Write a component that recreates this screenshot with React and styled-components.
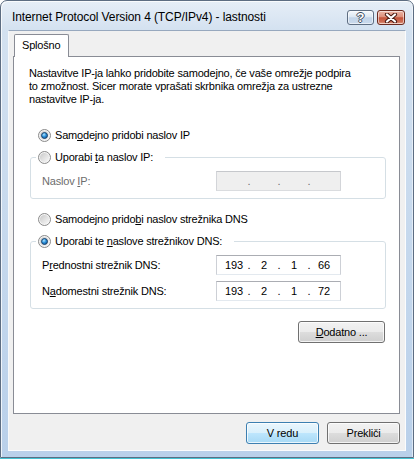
import React from "react";
import styled, { createGlobalStyle } from "styled-components";

const GlobalStyle = createGlobalStyle`
  html, body { margin: 0; padding: 0; background: #ffffff; }
  body {
    font-family: "Liberation Sans", Arial, sans-serif;
    font-size: 11px;
    letter-spacing: -0.19px;
    color: #000;
  }
  * { box-sizing: border-box; }
`;

const Page = styled.div`
  width: 414px;
  height: 459px;
  border-bottom: 1px solid #46c3d3;
  display: flex;
`;

const Window = styled.div`
  flex: 1;
  display: flex;
  flex-direction: column;
  border: 1px solid #5d6d82;
  border-radius: 7px 7px 0 0;
  background: linear-gradient(180deg, #e6eef7 0px, #d3e1f0 30px, #c5d8ed 55%, #b9d0ea 100%);
  box-shadow: inset 1px 1px 0 rgba(255, 255, 255, 0.75), inset -1px 0 0 rgba(255, 255, 255, 0.5);
  overflow: hidden;
`;

const TitleBar = styled.div`
  height: 29px;
  flex: none;
  display: flex;
  align-items: flex-start;
  justify-content: space-between;
  padding: 0 8px 0 11px;
`;

const Title = styled.div`
  margin-top: 9px;
  line-height: 15px;
  font-size: 12px;
  letter-spacing: -0.1px;
  white-space: nowrap;
`;

const CaptionButtons = styled.div`
  display: flex;
  gap: 3px;
  margin-top: 9px;
`;

const CaptionButton = styled.div`
  width: ${(p) => p.$w}px;
  height: 15px;
  border: 1px solid ${(p) => (p.$close ? "#6b2a1f" : "#5e6e82")};
  border-radius: 3px;
  display: flex;
  align-items: center;
  justify-content: center;
  background: ${(p) =>
    p.$close
      ? "linear-gradient(180deg, #ecb6a8 0%, #de907c 45%, #c4533a 52%, #cd6d54 82%, #e29f88 100%)"
      : "linear-gradient(180deg, #f4f8fc 0%, #dde8f3 45%, #c2d4e8 52%, #cadaed 100%)"};
  box-shadow: inset 0 0 0 1px rgba(255, 255, 255, 0.55);
`;

const HelpGlyph = styled.span`
  font-family: "Liberation Sans", Arial, sans-serif;
  font-weight: bold;
  font-size: 13px;
  line-height: 13px;
  color: #ffffff;
  text-shadow: 1px 0 0 #3c4b5c, -1px 0 0 #3c4b5c, 0 1px 0 #3c4b5c, 0 -1px 0 #3c4b5c;
`;

const Client = styled.div`
  flex: 1;
  margin: 0 7px 6px;
  display: flex;
  flex-direction: column;
  background: #f0f0f0;
  border: 1px solid;
  border-color: #97a8be #fbfcfd #fbfcfd #f5f8fb;
  padding: 3px 5px 0 4px;
`;

const TabStrip = styled.div`
  display: flex;
  padding-left: 1px;
`;

const Tab = styled.div`
  position: relative;
  z-index: 1;
  width: 55px;
  height: 23px;
  margin-bottom: -1px;
  background: #ffffff;
  border: 1px solid #898c95;
  border-bottom: none;
  border-radius: 2px 2px 0 0;
  padding: 3px 0 0 7px;
  line-height: 14px;
`;

const Panel = styled.div`
  flex: 1;
  display: flex;
  flex-direction: column;
  background: #ffffff;
  border: 1px solid #898c95;
  padding: 10px 13px 0 15px;
`;

const Intro = styled.p`
  margin: 0;
  line-height: 13px;
`;

const RadioRow = styled.div`
  display: flex;
  align-items: center;
  gap: 4px;
  height: 13px;
  line-height: 13px;
  margin-top: ${(p) => p.$top || 0}px;
  margin-left: ${(p) => p.$indent || 0}px;
  white-space: nowrap;
`;

const Group = styled.fieldset`
  margin: ${(p) => p.$top || 0}px 0 0 1px;
  padding: 0;
  min-width: 0;
  border: 1px solid #d5dfe5;
  border-radius: 3px;
`;

const GroupLegend = styled.legend`
  margin-left: 5px;
  padding: 0 12px 0 2px;
`;

const GroupBody = styled.div`
  display: grid;
  grid-template-columns: 174px 125px;
  row-gap: 6px;
  align-items: center;
  padding: 7px 0 7px 11px;
`;

const FieldLabel = styled.span`
  color: ${(p) => (p.$disabled ? "#6d6d6d" : "#000")};
  white-space: nowrap;
`;

const IpBox = styled.div`
  height: 20px;
  display: flex;
  align-items: center;
  padding-left: 5px;
  border: 1px solid;
  border-color: ${(p) => (p.$disabled ? "#c6c8cc #d3d5d9 #dadcdf #d3d5d9" : "#abadb3 #cdd0d6 #e3e9ef #cdd0d6")};
  background: ${(p) => (p.$disabled ? "#efefef" : "#ffffff")};
  color: ${(p) => (p.$disabled ? "#6d6d6d" : "#000")};
`;

const Octet = styled.span`
  width: 24px;
  text-align: center;
`;

const Dot = styled.span`
  width: 6px;
  text-align: center;
`;

const Key = styled.span`
  text-decoration: underline;
  text-underline-offset: 1px;
`;

const Button = styled.button`
  width: ${(p) => p.$w}px;
  height: 22px;
  padding: 0;
  font: inherit;
  letter-spacing: inherit;
  color: #000;
  border: 1px solid ${(p) => (p.$default ? "#3c7fb1" : "#707070")};
  border-radius: 3px;
  background: ${(p) =>
    p.$default
      ? "linear-gradient(180deg, #eaf6fd 0%, #d9f0fc 50%, #bee6fd 50%, #a7d9f5 100%)"
      : "linear-gradient(180deg, #f2f2f2 0%, #ebebeb 50%, #dddddd 50%, #cfcfcf 100%)"};
  box-shadow: inset 0 0 0 1px rgba(255, 255, 255, 0.75);
`;

const MoreButton = styled(Button)`
  align-self: flex-end;
  margin: 12px 1px 0 0;
`;

const Footer = styled.div`
  display: flex;
  justify-content: flex-end;
  gap: 8px;
  padding: 8px 0 6px;
`;

function RadioIcon({ checked }) {
  return (
    <svg width="13" height="13" viewBox="0 0 13 13" style={{ flex: "none" }}>
      <defs>
        <linearGradient id="radioInner" x1="0" y1="0" x2="1" y2="1">
          <stop offset="0" stopColor="#c9c9c9" />
          <stop offset="1" stopColor="#f8f8f8" />
        </linearGradient>
        <radialGradient id="radioDot" cx="0.4" cy="0.35" r="0.75">
          <stop offset="0" stopColor="#b5e6ff" />
          <stop offset="0.45" stopColor="#2e93dc" />
          <stop offset="1" stopColor="#0c4a8c" />
        </radialGradient>
      </defs>
      <circle cx="6.5" cy="6.5" r="6" fill="#f5f5f5" stroke="#8a8a8a" />
      <circle cx="6.5" cy="6.5" r="4.6" fill="url(#radioInner)" />
      {checked && <circle cx="6.5" cy="6.5" r="3" fill="url(#radioDot)" stroke="#1b3f66" strokeWidth="0.9" />}
    </svg>
  );
}

function IpField({ value, disabled }) {
  const parts = value || ["", "", "", ""];
  return (
    <IpBox $disabled={disabled}>
      <Octet>{parts[0]}</Octet>
      <Dot>.</Dot>
      <Octet>{parts[1]}</Octet>
      <Dot>.</Dot>
      <Octet>{parts[2]}</Octet>
      <Dot>.</Dot>
      <Octet>{parts[3]}</Octet>
    </IpBox>
  );
}

export default function App() {
  return (
    <>
      <GlobalStyle />
      <Page>
        <Window>
          <TitleBar>
            <Title>Internet Protocol Version 4 (TCP/IPv4) - lastnosti</Title>
            <CaptionButtons>
              <CaptionButton $w={27}>
                <HelpGlyph>?</HelpGlyph>
              </CaptionButton>
              <CaptionButton $w={28} $close>
                <svg width="14" height="10" viewBox="0 0 14 10">
                  <path d="M3 1.5 L11 8.5 M11 1.5 L3 8.5" stroke="#4a1a12" strokeWidth="4.2" strokeLinecap="round" />
                  <path d="M3 1.5 L11 8.5 M11 1.5 L3 8.5" stroke="#ffffff" strokeWidth="2.2" strokeLinecap="round" />
                </svg>
              </CaptionButton>
            </CaptionButtons>
          </TitleBar>
          <Client>
            <TabStrip>
              <Tab>Splošno</Tab>
            </TabStrip>
            <Panel>
              <Intro>
                Nastavitve IP-ja lahko pridobite samodejno, če vaše omrežje podpira
                <br />
                to zmožnost. Sicer morate vprašati skrbnika omrežja za ustrezne
                <br />
                nastavitve IP-ja.
              </Intro>
              <RadioRow $top={23} $indent={9}>
                <RadioIcon checked />
                <span>
                  Sam<Key>o</Key>dejno pridobi naslov IP
                </span>
              </RadioRow>
              <Group $top={9}>
                <GroupLegend>
                  <RadioRow>
                    <RadioIcon />
                    <span>
                      Uporabi <Key>t</Key>a naslov IP:
                    </span>
                  </RadioRow>
                </GroupLegend>
                <GroupBody>
                  <FieldLabel $disabled>
                    Naslov <Key>I</Key>P:
                  </FieldLabel>
                  <IpField disabled />
                </GroupBody>
              </Group>
              <RadioRow $top={14} $indent={9}>
                <RadioIcon />
                <span>
                  Samodejno prido<Key>b</Key>i naslov strežnika DNS
                </span>
              </RadioRow>
              <Group $top={9}>
                <GroupLegend>
                  <RadioRow>
                    <RadioIcon checked />
                    <span>
                      Uporabi te <Key>n</Key>aslove strežnikov DNS:
                    </span>
                  </RadioRow>
                </GroupLegend>
                <GroupBody>
                  <FieldLabel>
                    P<Key>r</Key>ednostni strežnik DNS:
                  </FieldLabel>
                  <IpField value={["193", "2", "1", "66"]} />
                  <FieldLabel>
                    N<Key>a</Key>domestni strežnik DNS:
                  </FieldLabel>
                  <IpField value={["193", "2", "1", "72"]} />
                </GroupBody>
              </Group>
              <MoreButton $w={87}>
                <Key>D</Key>odatno ...
              </MoreButton>
            </Panel>
            <Footer>
              <Button $w={73} $default>
                V redu
              </Button>
              <Button $w={73}>Prekliči</Button>
            </Footer>
          </Client>
        </Window>
      </Page>
    </>
  );
}
